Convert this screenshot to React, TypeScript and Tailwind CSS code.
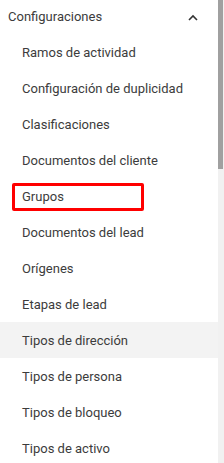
const items = [
  "Ramos de actividad",
  "Configuración de duplicidad",
  "Clasificaciones",
  "Documentos del cliente",
  "Grupos",
  "Documentos del lead",
  "Orígenes",
  "Etapas de lead",
  "Tipos de dirección",
  "Tipos de persona",
  "Tipos de bloqueo",
  "Tipos de activo",
];

export default function App() {
  return (
    <div className="flex h-[463px] w-[224px] overflow-hidden bg-white font-['Roboto',sans-serif] text-[13px] text-[#3c3c3c]">
      <div className="flex w-[218px] flex-col">
        <div className="flex h-[34px] shrink-0 items-center justify-between pl-2 pr-[20px]">
          <span>Configuraciones</span>
          <svg width="10" height="7" viewBox="0 0 10 7" fill="none">
            <path d="M1 6 L5 2 L9 6" stroke="#333" strokeWidth="1.6" />
          </svg>
        </div>
        {items.map((label) => (
          <div
            key={label}
            className={`relative flex h-[36px] shrink-0 items-center pt-[2px] pl-[22px] ${
              label === "Tipos de dirección" ? "bg-[#f3f3f3]" : ""
            }`}
          >
            {label === "Grupos" && (
              <div className="absolute left-[12px] top-[5px] h-[28px] w-[132px] rounded-[2px] border-[3px] border-[#ff0000]" />
            )}
            {label}
          </div>
        ))}
      </div>
      <div className="flex w-[6px] flex-col bg-[#f1f1f1]">
        <div className="h-[169px] w-[5px] bg-[#a0a0a0]" />
      </div>
    </div>
  );
}
